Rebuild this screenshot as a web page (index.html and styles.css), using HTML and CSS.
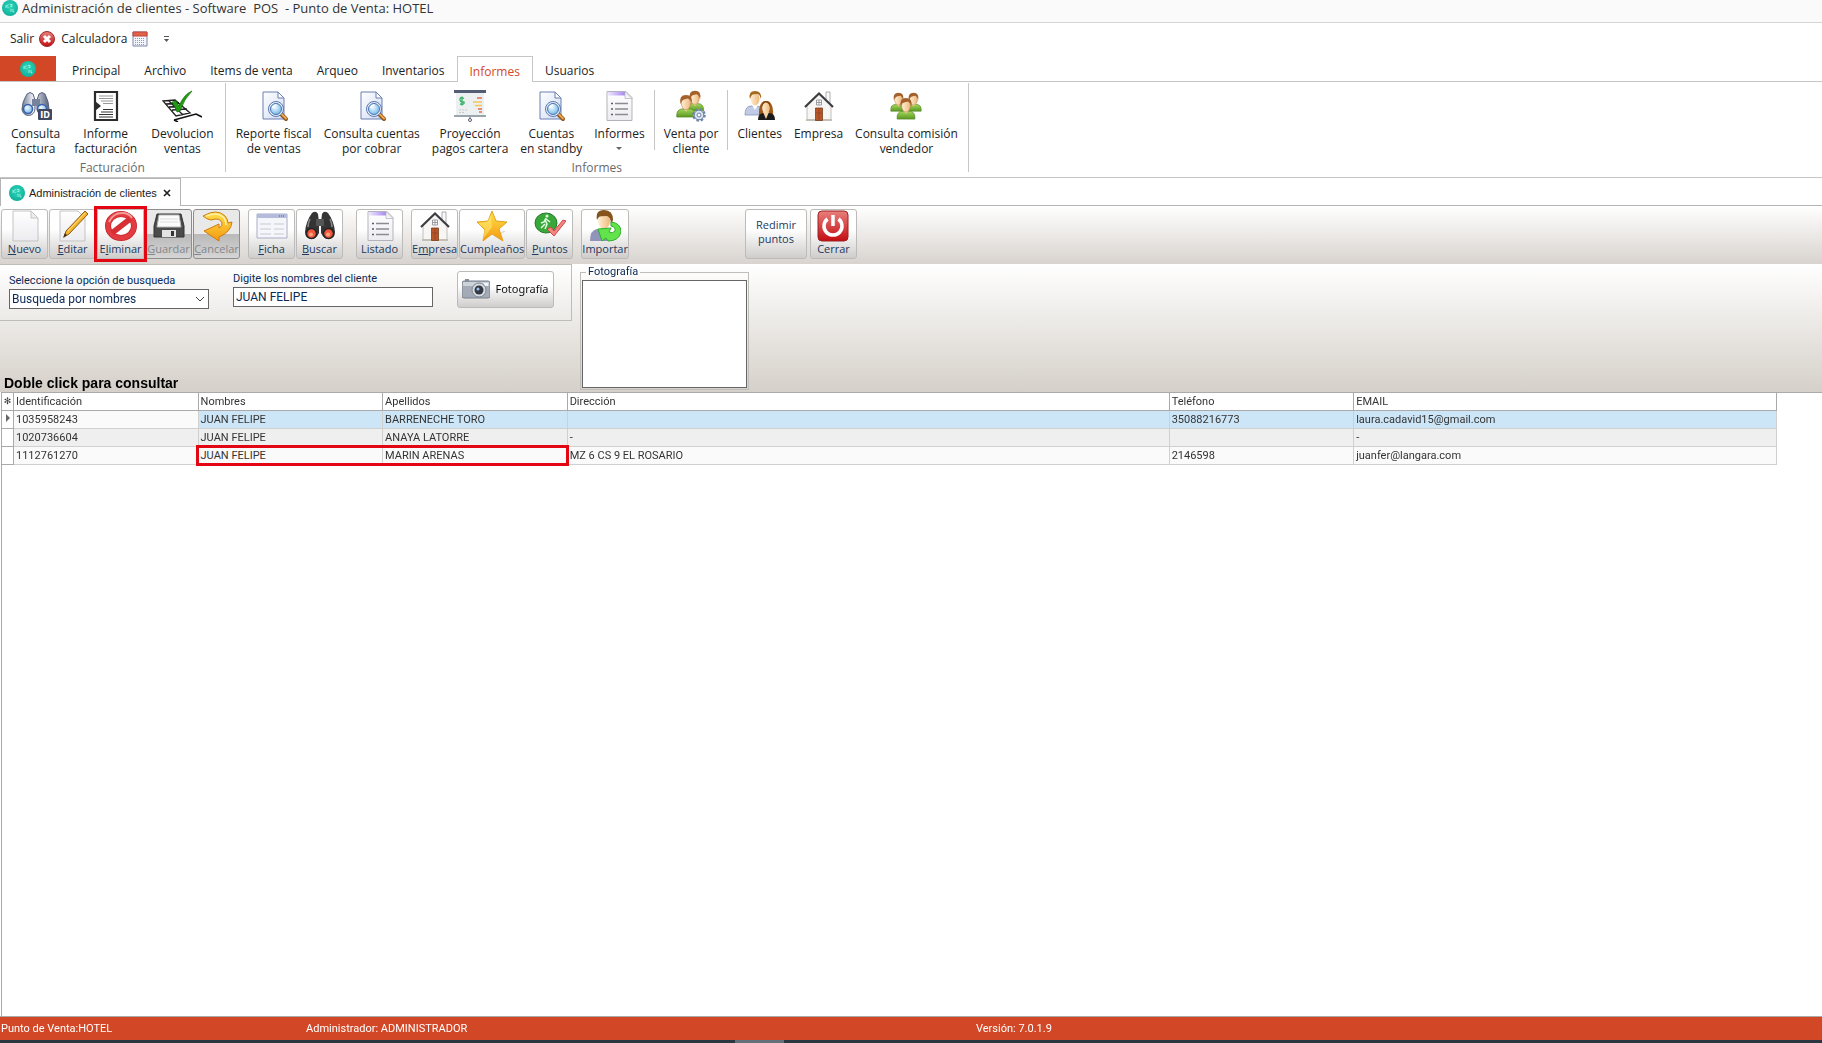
FILE: index.html
```html
<!DOCTYPE html>
<html lang="es">
<head>
  <meta charset="UTF-8">
  <meta name="viewport" content="width=device-width, initial-scale=1.0">
  <title>Administración de clientes</title>
  <link rel="stylesheet" href="styles.css">
</head>
<body>

<!-- Icons used more than once -->
<svg class="sprite" aria-hidden="true">
  <defs>
    <linearGradient id="page" x1="0" y1="0" x2="1" y2="1"><stop offset="0" stop-color="#fff"/><stop offset="1" stop-color="#cfdbf3"/></linearGradient>
    <linearGradient id="paper" x1="0" y1="0" x2="0" y2="1"><stop offset="0" stop-color="#fff"/><stop offset="1" stop-color="#ececf0"/></linearGradient>
    <linearGradient id="violet" x1="0" y1="0" x2="1" y2="0"><stop offset="0" stop-color="#eee6ff"/><stop offset="1" stop-color="#9a78ec"/></linearGradient>
    <linearGradient id="green" x1="0" y1="0" x2="0" y2="1"><stop offset="0" stop-color="#a6d65c"/><stop offset="1" stop-color="#5b9a22"/></linearGradient>
    <linearGradient id="red" x1="0" y1="0" x2="0" y2="1"><stop offset="0" stop-color="#e8807c"/><stop offset="1" stop-color="#c20d12"/></linearGradient>
    <linearGradient id="steel" x1="0" y1="0" x2="1" y2="0"><stop offset="0" stop-color="#6f7a90"/><stop offset=".4" stop-color="#eef1f6"/><stop offset="1" stop-color="#56617a"/></linearGradient>
    <linearGradient id="skin" x1="0" y1="0" x2="1" y2="0"><stop offset="0" stop-color="#fff0d6"/><stop offset="1" stop-color="#eeb87c"/></linearGradient>
    <linearGradient id="gold" x1="0" y1="0" x2="0" y2="1"><stop offset="0" stop-color="#ffe14a"/><stop offset="1" stop-color="#f59a12"/></linearGradient>
    <radialGradient id="glass" cx=".4" cy=".35" r=".7"><stop offset="0" stop-color="#f2fbff"/><stop offset="1" stop-color="#6db6e8"/></radialGradient>
    <radialGradient id="teal" cx=".5" cy=".4" r=".6"><stop offset="0" stop-color="#2fd9bd"/><stop offset="1" stop-color="#0fae98"/></radialGradient>
  </defs>

  <symbol id="logo" viewBox="0 0 16 16">
    <circle cx="8" cy="8" r="8" fill="url(#teal)"/>
    <path d="M4 5v3M4.500 6l2-1.500M5 6.500l1.500 1.500M8 4.500h2v2H8.500M9 9v3M11 9v3l1.500 0" fill="none" stroke="#c9fff4" stroke-width=".7"/>
  </symbol>

  <symbol id="search-page" viewBox="0 0 32 32">
    <path d="M5 2h15l6 6v21H5z" fill="url(#page)" stroke="#6b7fb4"/>
    <path d="M20 2v6h6z" fill="#fff" stroke="#6b7fb4"/>
    <path d="M23 24l5 5" stroke="#8c531d" stroke-width="4" stroke-linecap="round"/>
    <path d="M23.500 24l4.500 4.500" stroke="#f0a54a" stroke-width="2" stroke-linecap="round"/>
    <circle cx="18" cy="19" r="7.500" fill="#e8eef8" stroke="#5c77ad"/>
    <circle cx="18" cy="19" r="5.500" fill="url(#glass)" stroke="#4a74b0"/>
    <path d="M14.500 18q1-3 4-3" fill="none" stroke="#fff" stroke-width="1.500"/>
  </symbol>

  <symbol id="list-page" viewBox="0 0 32 32">
    <path d="M4 1.500h19l6 6v23H4z" fill="url(#paper)" stroke="#b3b3bd"/>
    <path d="M5 2h17l3 3.500H5z" fill="url(#violet)"/>
    <path d="M22 1.500v7h7z" fill="#f3f3f6" stroke="#b3b3bd" stroke-width=".7"/>
    <path d="M12 13.500h13M12 19h13M12 24.500h13" stroke="#8b8b92" stroke-width="1.400"/>
    <path d="M8 13.500h2M8 19h2M8 24.500h2" stroke="#5c5c63" stroke-width="1.600"/>
  </symbol>

  <symbol id="house" viewBox="0 0 32 32">
    <path d="M23 2h4v12h-4z" fill="#fafafa" stroke="#9a9a9a" stroke-width=".8"/>
    <path d="M4 15L16 4l12 11v15H4z" fill="#f7f6f4" stroke="#b5b2ac" stroke-width=".8"/>
    <path d="M3 29h26v2H3z" fill="#c3bfb7"/>
    <path d="M2 17L16 3.500 30 17" fill="none" stroke="#3d3d42" stroke-width="2.200"/>
    <path d="M12.500 18h7v12.500h-7z" fill="#b8562a" stroke="#77401f" stroke-width=".8"/>
    <path d="M16 18v12M13 23h6" stroke="#8b421f" stroke-width=".7"/>
    <path d="M13.500 10h5v5h-5zM16 10v5M13.500 12.500h5" fill="#fff" stroke="#85888f" stroke-width=".8"/>
  </symbol>

  <symbol id="person" viewBox="0 0 20 26">
    <path d="M0 25q-1-9 7-9h6q8 0 7 9z" fill="url(#green)" stroke="#4d7f1f" stroke-width=".7"/>
    <path d="M6.500 15l3.500 4 3.500-4z" fill="#f6d2a3"/>
    <ellipse cx="10" cy="10" rx="5" ry="7" fill="url(#skin)" stroke="#b37440" stroke-width=".6"/>
    <path d="M4 11Q2 1 10 1t6 10q-1-5-4-6-5 1-6 2-1 1-2 4z" fill="#a5612c"/>
  </symbol>
</svg>

<div class="app">
  <header class="title-bar">
    <svg class="icon-16"><use href="#logo"/></svg>
    <h1>Administración de clientes - Software &nbsp;POS &nbsp;- Punto de Venta: HOTEL</h1>
  </header>

  <div class="quick-bar">
    <button>Salir
      <svg class="icon-16" viewBox="0 0 16 16"><circle cx="8" cy="8" r="7.500" fill="url(#red)" stroke="#9c2a2a"/><path d="M5 5l6 6M11 5l-6 6" stroke="#fff" stroke-width="3"/></svg>
    </button>
    <button>Calculadora
      <svg class="icon-16" viewBox="0 0 16 16"><path d="M1 1h14v14H1z" fill="#f3f5fc" stroke="#7a86a8"/><path d="M1 1h14v4H1z" fill="#e2604c" stroke="#c04636"/><path d="M3 7.500h10M3 9.500h10M3 11.500h10M3 13.500h10" stroke="#8b9bd0" stroke-dasharray="1 1"/></svg>
    </button>
    <button class="quick-more" aria-label="Personalizar">
      <svg class="icon-8" viewBox="0 0 8 8"><path d="M2 1.500h5" stroke="#555"/><path d="M2 4h5L4.500 7z" fill="#555"/></svg>
    </button>
  </div>

  <nav class="tabs">
    <button class="file-tab" aria-label="Menú"><svg class="icon-16"><use href="#logo"/></svg></button>
    <a href="#">Principal</a>
    <a href="#">Archivo</a>
    <a href="#">Items de venta</a>
    <a href="#">Arqueo</a>
    <a href="#">Inventarios</a>
    <a href="#" class="active">Informes</a>
    <a href="#">Usuarios</a>
  </nav>

  <div class="ribbon">
    <section class="ribbon-group">
      <div class="ribbon-items">
        <button class="ribbon-btn">
          <svg viewBox="0 0 32 32">
            <path d="M7 4q3-3 6 0l2 6v9a6 6 0 0 1-13 0q0-7 5-15zM25 4q-3-3-6 0l-2 6v9a6 6 0 0 0 12 0q0-7-4-15z" fill="url(#steel)" stroke="#59657e"/>
            <path d="M12 9h8v7h-8z" fill="#77839c"/>
            <circle cx="8" cy="19" r="4.500" fill="url(#glass)" stroke="#3c5fae" stroke-width="1.500"/>
            <circle cx="22" cy="19" r="4.500" fill="url(#glass)" stroke="#3c5fae" stroke-width="1.500"/>
            <rect x="18" y="19" width="14" height="11" rx="1" fill="#3f4961"/>
            <text x="25" y="28" class="id-text">ID</text>
          </svg>
          <span>Consulta<br>factura</span>
        </button>
        <button class="ribbon-btn">
          <svg viewBox="0 0 32 32">
            <path d="M5 2h22v28H5z" fill="#fff" stroke="#2b2b2b" stroke-width="2.200"/>
            <path d="M5 11l6 5-6 5z" fill="#2b2b2b"/>
            <path d="M9 6h14M9 8.500h14M11 11h12M13 13.500h10" stroke="#999"/>
            <path d="M13 19.500h10M11 22h12M9 24.500h14M9 27h14" stroke="#333"/>
          </svg>
          <span>Informe<br>facturación</span>
        </button>
        <button class="ribbon-btn">
          <svg class="wide" viewBox="0 0 40 32">
            <path d="M1 11l12-1 15 13-14 3zM4 14l13-1M7 17l14-1M10 20l15-1M7 11l14 14" fill="#fff" stroke="#222" stroke-width="1.300"/>
            <path d="M12 30l22-6 6 3M12 30l4 2" fill="none" stroke="#111" stroke-width="1.600"/>
            <path d="M10 12l4-1 3 5q5-12 13-15-8 8-12 20l-3 1q-2-6-5-10z" fill="#1f9c12" stroke="#127008" stroke-width=".7"/>
          </svg>
          <span>Devolucion<br>ventas</span>
        </button>
      </div>
      <h2>Facturación</h2>
    </section>

    <section class="ribbon-group compact">
      <div class="ribbon-items">
        <button class="ribbon-btn"><svg><use href="#search-page"/></svg><span>Reporte fiscal<br>de ventas</span></button>
        <button class="ribbon-btn"><svg><use href="#search-page"/></svg><span>Consulta cuentas<br>por cobrar</span></button>
        <button class="ribbon-btn">
          <svg viewBox="0 0 32 32">
            <path d="M2 3h28v22H2z" fill="#edf0f0"/>
            <path d="M0 0h32v3H0z" fill="#535d75"/>
            <path d="M0 25h32v2H0z" fill="#9ba5ae"/>
            <path d="M16 27v2" stroke="#535d75"/><circle cx="16" cy="30" r="1.500" fill="#fff" stroke="#535d75"/>
            <path d="M10 8.500q-4-2-4 1t4 2.500q1 3-4 2M8 6.500v9" fill="none" stroke="#35b166" stroke-width="1.300"/>
            <path d="M19 12h9M21 15.500h7" stroke="#f6c755" stroke-width="1.600"/>
            <path d="M23 8h5M24 19h4M25 22h3" stroke="#ea6a55" stroke-width="1.400"/>
            <path d="M5 20h9M5 22.500h6" stroke="#c5c9cd" stroke-dasharray="2 1"/>
          </svg>
          <span>Proyección<br>pagos cartera</span>
        </button>
        <button class="ribbon-btn"><svg><use href="#search-page"/></svg><span>Cuentas<br>en standby</span></button>
        <button class="ribbon-btn"><svg><use href="#list-page"/></svg><span>Informes<br><i class="arrow"></i></span></button>
        <div class="divider"></div>
        <button class="ribbon-btn">
          <svg viewBox="0 0 32 32">
            <use href="#person" x="11" y="0" width="18" height="22"/>
            <use href="#person" x="1" y="4" width="20" height="24"/>
            <circle cx="24" cy="25" r="5.500" fill="#dfe6f2" stroke="#6b80a5" stroke-width="2.500" stroke-dasharray="2.300 2"/>
            <circle cx="24" cy="25" r="4.800" fill="#dbe4f1" stroke="#6b80a5"/>
            <circle cx="24" cy="25" r="2" fill="#fff" stroke="#6b80a5"/>
          </svg>
          <span>Venta por<br>cliente</span>
        </button>
        <div class="divider"></div>
        <button class="ribbon-btn">
          <svg viewBox="0 0 32 32">
            <path d="M1 25q0-9 6-9h6q6 0 6 9z" fill="#c1cbe6" stroke="#7c8bb5" stroke-width=".7"/>
            <path d="M8 15l3 5 3-5z" fill="#fff"/>
            <ellipse cx="11" cy="9" rx="4.500" ry="6.500" fill="url(#skin)"/>
            <path d="M6 9Q4 1 11 1t6 8q-1-4-3-5-5 0-6 1-1 1-2 4z" fill="#a56a20"/>
            <path d="M15 27q-1-16 7-16t7 16z" fill="#a05a18"/>
            <path d="M14 30q0-7 6-7h5q6 0 6 7z" fill="#1b1b1b"/>
            <path d="M19 22l3 7 3-7z" fill="#f6d2a3"/>
            <ellipse cx="22" cy="18" rx="3.800" ry="5.500" fill="url(#skin)"/>
            <path d="M18 17q1-4 4-5 3 1 4 5 1-6-4-6t-4 6z" fill="#87460f"/>
          </svg>
          <span>Clientes</span>
        </button>
        <button class="ribbon-btn"><svg><use href="#house"/></svg><span>Empresa</span></button>
        <button class="ribbon-btn">
          <svg viewBox="0 0 32 32">
            <use href="#person" x="-1" y="2" width="19" height="20"/>
            <use href="#person" x="14" y="2" width="19" height="20"/>
            <use href="#person" x="5" y="7" width="22" height="23"/>
          </svg>
          <span>Consulta comisión<br>vendedor</span>
        </button>
      </div>
      <h2>Informes</h2>
    </section>
  </div>

  <div class="doc-tabs">
    <div class="doc-tab">
      <svg class="icon-16"><use href="#logo"/></svg>
      <span>Administración de clientes</span>
      <button aria-label="Cerrar pestaña"><svg class="icon-8" viewBox="0 0 8 8"><path d="M1 1l6 6M7 1L1 7" stroke="#222" stroke-width="1.700"/></svg></button>
    </div>
  </div>

  <div class="toolbar">
    <div class="tool-group">
      <button class="tool-btn">
        <svg viewBox="0 0 32 32"><path d="M4 1h18l7 7v23H4z" fill="url(#paper)" stroke="#c3c3c3"/><path d="M22 1v7h7z" fill="#eee" stroke="#c3c3c3"/></svg>
        <span><u>N</u>uevo</span>
      </button>
      <button class="tool-btn">
        <svg viewBox="0 0 32 32"><path d="M3 1h18l7 7v23H3z" fill="url(#paper)" stroke="#c3c3c3"/><path d="M7 27l2-6L28 1l3 3-19 20z" fill="#f4b52d" stroke="#8e5a17"/><path d="M8 23l2 2-4 3z" fill="#3d3020"/><path d="M11 21L28 3" stroke="#ffe28a"/></svg>
        <span><u>E</u>ditar</span>
      </button>
      <button class="tool-btn highlighted">
        <svg viewBox="0 0 32 32"><ellipse cx="16" cy="16" rx="13" ry="12" fill="#fff" stroke="#c4262b" stroke-width="6"/><ellipse cx="16" cy="16" rx="13" ry="12" fill="none" stroke="#e23c40" stroke-width="4.500"/><path d="M7 23L25 9" stroke="#d62f34" stroke-width="5.500"/><path d="M4 12q4-9 13-9 7 0 10 5" fill="none" stroke="#f59a98" stroke-width="2"/></svg>
        <span>E<u>l</u>iminar</span>
      </button>
      <button class="tool-btn" disabled>
        <svg viewBox="0 0 32 32"><path d="M4 4h24l3 12v11H1V16z" fill="#4b4b4b" stroke="#333"/><path d="M6 5h20l2 12H4z" fill="#fbfbfb" stroke="#bbb"/><path d="M9 20h14v7H9z" fill="#e2e2e2"/><path d="M18 21h3v5h-3z" fill="#333"/><path d="M7 9h18M7 12h18" stroke="#ddd"/></svg>
        <span><u>G</u>uardar</span>
      </button>
      <button class="tool-btn" disabled>
        <svg viewBox="0 0 32 32"><path d="M2 6q14-8 22 0 3 3 3 7l4-1q-1 10-13 15v4L3 21l15-7v4q4-2 3-5-2-6-11-3-5-1-8-4z" fill="url(#gold)" stroke="#d07a0b"/><path d="M5 6q12-5 18 2 2 3 2 7" fill="none" stroke="#fff0a8" stroke-width="1.500"/></svg>
        <span><u>C</u>ancelar</span>
      </button>
    </div>

    <div class="tool-group">
      <button class="tool-btn">
        <svg viewBox="0 0 32 32"><path d="M1 4h30v24H1z" fill="#f5f6fa" stroke="#a7aec6"/><path d="M1 4h30v4H1z" fill="#b4bcdc"/><path d="M23 6h6" stroke="#4d5b95" stroke-dasharray="1 1"/><path d="M4 14h11M18 14h10M4 19h11M18 19h10M4 24h11M18 24h10" stroke="#c6c9d4"/></svg>
        <span><u>F</u>icha</span>
      </button>
      <button class="tool-btn">
        <svg viewBox="0 0 32 32"><path d="M8 3q4-3 6 1l1 8v11q-3 6-7 6-7 0-7-7Q2 11 8 3zM24 3q-4-3-6 1l-1 8v11q3 6 7 6 7 0 7-7-1-11-7-19z" fill="#343434"/><path d="M6 9q-2 4-2 8M26 9q2 4 2 8" stroke="#8a8a8a" stroke-width="1.500" fill="none"/><path d="M12 9h8v7h-8z" fill="#555"/><circle cx="7.500" cy="23.500" r="5" fill="#f2573c" stroke="#222" stroke-width="1.500"/><circle cx="24.500" cy="23.500" r="5" fill="#f2573c" stroke="#222" stroke-width="1.500"/><circle cx="7" cy="24.500" r="2" fill="#ffa37f"/><circle cx="24" cy="24.500" r="2" fill="#ffa37f"/></svg>
        <span><u>B</u>uscar</span>
      </button>
    </div>

    <div class="tool-group">
      <button class="tool-btn"><svg><use href="#list-page"/></svg><span>Listado</span></button>
    </div>

    <div class="tool-group">
      <button class="tool-btn"><svg><use href="#house"/></svg><span>E<u>m</u>presa</span></button>
      <button class="tool-btn">
        <svg viewBox="0 0 32 32"><path d="M18 29l12-8-4 0 3-2" fill="#ddd"/><path d="M16 1l4 10 11 1-8 7 4 12-11-7-9 7 2-11-8-8 11-1z" fill="url(#gold)" stroke="#e3a21b"/><path d="M15 5l1 12-9 12 2-10-7-6 9-1z" fill="#fff07a" opacity=".5"/></svg>
        <span>Cumpleaños</span>
      </button>
      <button class="tool-btn">
        <svg viewBox="0 0 32 32"><ellipse cx="12" cy="13" rx="11" ry="10" fill="#38a83a" stroke="#267a2a"/><circle cx="13" cy="6" r="1.500" fill="#e4ffe2"/><path d="M12 8l-2 4-3 1M11 10l2 4-2 5M12 9l4 3M11 14l-4 4" fill="none" stroke="#e4ffe2" stroke-width="1.500"/><path d="M13 19l4-2 3 4 9-11 3 1-12 15z" fill="#f28682" stroke="#cf4444"/></svg>
        <span><u>P</u>untos</span>
      </button>
    </div>

    <div class="tool-group">
      <button class="tool-btn">
        <svg viewBox="0 0 32 32"><path d="M1 31q0-11 7-12h9l4 12z" fill="#8f94b8"/><ellipse cx="15" cy="11" rx="6" ry="8" fill="url(#skin)"/><path d="M8 10Q6 0 15 0t9 10l-2 5q0-8-4-9-7 0-8 1-1 1-2 3z" fill="#85531b"/><path d="M22 12q10 1 10 10-2 9-13 9l-2-3-4 3-4-12 13-1-2 4q4 2 6-1 1-4-4-5z" fill="#62e34b" stroke="#2fae2b"/></svg>
        <span>Importar</span>
      </button>
    </div>

    <div class="tool-group tool-end">
      <button class="tool-btn text-only"><span>Redimir<br>puntos</span></button>
      <button class="tool-btn">
        <svg viewBox="0 0 32 32"><rect x="1" y="1" width="30" height="30" rx="4" fill="url(#red)" stroke="#a02020"/><path d="M10.500 9a9 9 0 1 0 11 0" fill="none" stroke="#fff" stroke-width="3.500"/><path d="M16 5v11" stroke="#fff" stroke-width="3.500"/></svg>
        <span>Cerrar</span>
      </button>
    </div>
  </div>

  <main>
    <form class="search-panel">
      <div class="left-side">
        <div class="filter-box">
          <div class="field field-option">
            <label for="searchOption">Seleccione la opción de busqueda</label>
            <div class="select-wrap">
              <select id="searchOption">
                <option>Busqueda por nombres</option>
              </select>
              <svg class="chevron" viewBox="0 0 10 6"><path d="M1 1l4 4 4-4" fill="none" stroke="#444"/></svg>
            </div>
          </div>
          <div class="field">
            <label for="clientName">Digite los nombres del cliente</label>
            <input type="text" id="clientName" value="JUAN FELIPE">
          </div>
          <button type="button" class="photo-btn">
            <svg viewBox="0 0 28 20"><rect x="0" y="2" width="28" height="17" rx="2" fill="#a3abb6" stroke="#79818d"/><path d="M1 3h26v4H1z" fill="#cdd3da"/><path d="M3 0h4v3H3z" fill="#868e99"/><path d="M22 4h4v3h-4z" fill="#f0f4f8"/><circle cx="17" cy="11" r="7" fill="#d6dbe1" stroke="#7d858f"/><circle cx="17" cy="11" r="4.500" fill="#333a46"/><circle cx="16" cy="10" r="1.500" fill="#9fc0ea"/></svg>
            <span>Fotografía</span>
          </button>
        </div>
        <p class="hint">Doble click para consultar</p>
      </div>
      <fieldset class="photo-box">
        <legend>Fotografía</legend>
        <div class="photo"></div>
      </fieldset>
    </form>

    <div class="grid">
      <table>
        <colgroup>
          <col class="col-mark">
          <col class="col-std">
          <col class="col-std">
          <col class="col-std">
          <col>
          <col class="col-std">
          <col class="col-email">
        </colgroup>
        <thead>
          <tr>
            <th class="mark">✻</th>
            <th>Identificación</th>
            <th>Nombres</th>
            <th>Apellidos</th>
            <th>Dirección</th>
            <th>Teléfono</th>
            <th>EMAIL</th>
          </tr>
        </thead>
        <tbody>
          <tr class="selected">
            <td class="mark"><svg class="pointer" viewBox="0 0 4 8"><path d="M0 0l4 4-4 4z" fill="#666"/></svg></td>
            <td>1035958243</td>
            <td>JUAN FELIPE</td>
            <td>BARRENECHE TORO</td>
            <td></td>
            <td>35088216773</td>
            <td>laura.cadavid15@gmail.com</td>
          </tr>
          <tr class="alt">
            <td class="mark"></td>
            <td>1020736604</td>
            <td>JUAN FELIPE</td>
            <td>ANAYA LATORRE</td>
            <td>-</td>
            <td></td>
            <td>-</td>
          </tr>
          <tr>
            <td class="mark"></td>
            <td>1112761270</td>
            <td class="framed">JUAN FELIPE<span class="frame"></span></td>
            <td>MARIN ARENAS</td>
            <td>MZ 6 CS 9 EL ROSARIO</td>
            <td>2146598</td>
            <td>juanfer@langara.com</td>
          </tr>
        </tbody>
      </table>
    </div>
  </main>

  <footer class="status-bar">
    <span>Punto de Venta:HOTEL</span>
    <span>Administrador: ADMINISTRADOR</span>
    <span>Versión: 7.0.1.9</span>
  </footer>
  <div class="taskbar"><div class="taskbar-item"></div></div>
</div>

<script>
  // start with the cursor at the end of the name
  const nameInput = document.getElementById('clientName');
  nameInput.focus();
  nameInput.setSelectionRange(nameInput.value.length, nameInput.value.length);
</script>

</body>
</html>
```

FILE: styles.css
```css
* {
  box-sizing: border-box;
}

body {
  margin: 0;
  font-family: "Open Sans", "Noto Sans", sans-serif;
  font-size: 12px;
  color: #222;
  background-color: #fff;
}

button {
  font: inherit;
  color: inherit;
  background: none;
  border: none;
  padding: 0;
}

a {
  color: inherit;
  text-decoration: none;
}

.sprite {
  position: absolute;
  width: 0;
  height: 0;
}

.icon-16 {
  width: 16px;
  height: 16px;
  flex: none;
}

.icon-8 {
  width: 8px;
  height: 8px;
  display: block;
}

.app {
  min-height: 100vh;
  display: flex;
  flex-direction: column;
}

/* Title and quick access */
.title-bar {
  display: flex;
  align-items: center;
  gap: 4px;
  height: 23px;
  padding: 0 2px 6px;
  background-color: #fafafa;
  border-bottom: 1px solid #d5d5d5;
}

.title-bar h1 {
  margin: 0;
  font-size: 13px;
  font-weight: normal;
  color: #333;
}

.quick-bar {
  display: flex;
  align-items: center;
  gap: 6px;
  height: 33px;
  padding: 0 10px 2px;
}

.quick-bar button {
  display: flex;
  align-items: center;
  gap: 5px;
}

.quick-bar .quick-more {
  margin-left: 8px;
}

/* Ribbon tabs */
.tabs {
  display: flex;
  height: 26px;
  border-bottom: 1px solid #c6c6c6;
}

.tabs a {
  height: 26px;
  padding: 0 12px;
  line-height: 29px;
}

.file-tab {
  display: flex;
  justify-content: center;
  align-items: center;
  width: 56px;
  margin-right: 4px;
  background-color: #d24726;
}

.tabs .active {
  color: #d24726;
  background-color: #fff;
  border: 1px solid #c6c6c6;
  border-bottom: none;
}

/* Ribbon */
.ribbon {
  display: flex;
  height: 96px;
  border-bottom: 1px solid #c6c6c6;
}

.ribbon-group {
  display: flex;
  flex-direction: column;
  height: 89px;
  margin-top: 1px;
  padding: 0 4px;
  border-right: 1px solid #c6c6c6;
}

.ribbon-items {
  display: flex;
  flex: 1;
}

.ribbon-group h2 {
  margin: 0;
  font-size: 12px;
  font-weight: normal;
  line-height: 14px;
  height: 11px;
  text-align: center;
  color: #6a6a6a;
}

.ribbon-btn {
  display: flex;
  flex-direction: column;
  align-items: center;
  gap: 4px;
  padding: 7px 7px 0;
  line-height: 15px;
  text-align: center;
  white-space: nowrap;
}

.compact .ribbon-btn {
  padding: 7px 6px 0;
}

.ribbon-btn svg {
  width: 32px;
  height: 32px;
}

.ribbon-btn .wide {
  width: 40px;
}

.id-text {
  font: bold 8px "DejaVu Sans", sans-serif;
  fill: #fff;
  text-anchor: middle;
}

.arrow {
  display: inline-block;
  border: 3px solid transparent;
  border-top-color: #666;
}

.divider {
  width: 1px;
  height: 60px;
  margin: 7px 3px 0;
  background-color: #c6c6c6;
}

/* Document tabs */
.doc-tabs {
  display: flex;
  height: 28px;
  border-bottom: 1px solid #b4b4b4;
}

.doc-tab {
  display: flex;
  align-items: center;
  gap: 4px;
  height: 28px;
  padding: 1px 7px 0 8px;
  font-family: "Liberation Sans", sans-serif;
  font-size: 11px;
  background-color: #fff;
  border: 1px solid #b4b4b4;
  border-bottom: none;
}

.doc-tab button {
  padding: 2px;
}

/* Toolbar */
.toolbar {
  display: flex;
  align-items: flex-start;
  gap: 8px;
  height: 58px;
  padding: 3px 1px 0;
  background: linear-gradient(#fff, #d8d3ce);
}

.tool-group {
  display: flex;
  gap: 1px;
}

.tool-group:nth-child(3) {
  margin-left: 5px;
}

.tool-end {
  margin-left: 108px;
  gap: 3px;
}

.tool-btn {
  display: flex;
  flex-direction: column;
  align-items: center;
  min-width: 47px;
  height: 50px;
  font-size: 11px;
  line-height: 14px;
  color: #1e395b;
  background: linear-gradient(#fff 40%, #cfcdcc);
  border: 1px solid #bdbbb9;
  border-radius: 3px;
}

.tool-btn svg {
  width: 32px;
  height: 32px;
}

.tool-btn:disabled {
  color: #85878b;
  background: linear-gradient(#e9e9e9 50%, #b9b9b9 50%, #d5d5d5);
  border-color: #8d8d8d;
}

.highlighted {
  border-radius: 0;
  outline: 3px solid #e30613;
  z-index: 1;
}

.text-only {
  width: 62px;
  padding-top: 8px;
}

/* Search panel */
main {
  flex: 1;
  display: flex;
  flex-direction: column;
}

.search-panel {
  display: flex;
  gap: 8px;
  height: 128px;
  background: linear-gradient(#fff, #d5d0c9);
  font-family: Roboto, sans-serif;
  color: #0b2a55;
}

.left-side {
  display: flex;
  flex-direction: column;
  justify-content: space-between;
}

.filter-box {
  display: flex;
  gap: 24px;
  height: 57px;
  padding: 6px 17px 0 9px;
  border: 1px solid #bfbdba;
  border-left: none;
}

.field {
  display: flex;
  flex-direction: column;
  width: 200px;
}

.field-option {
  padding-top: 2px;
}

.field label {
  font-size: 11px;
  line-height: 16px;
}

.select-wrap {
  position: relative;
}

.field select,
.field input {
  width: 100%;
  height: 20px;
  padding: 0 2px;
  font: inherit;
  color: inherit;
  background-color: #fff;
  border: 1px solid #666;
  border-radius: 0;
  outline: none;
  appearance: none;
}

.chevron {
  position: absolute;
  top: 7px;
  right: 4px;
  width: 10px;
  height: 6px;
}

.photo-btn {
  display: flex;
  justify-content: center;
  align-items: center;
  gap: 5px;
  width: 97px;
  height: 37px;
  padding-bottom: 2px;
  font-family: "Noto Sans", sans-serif;
  font-size: 11px;
  color: #111;
  background: linear-gradient(#fff 40%, #cfcdcc);
  border: 1px solid #bdbbb9;
  border-radius: 3px;
}

.photo-btn svg {
  width: 28px;
  height: 20px;
}

.hint {
  margin: 0;
  padding-left: 4px;
  font-family: "Liberation Sans", sans-serif;
  font-size: 14px;
  font-weight: bold;
  line-height: 18px;
  color: #000;
}

.photo-box {
  width: 169px;
  height: 126px;
  margin: 0;
  padding: 0 1px 1px;
  border: 1px solid #bfbdba;
}

.photo-box legend {
  margin-left: 4px;
  padding: 0 2px;
  font-size: 11px;
  line-height: 16px;
}

.photo {
  height: 108px;
  background-color: #fff;
  border: 1px solid #666;
}

/* Client grid */
.grid {
  flex: 1;
  margin-left: 1px;
  border-top: 1px solid #aaa;
  border-left: 1px solid #aaa;
}

table {
  width: 97.5%;
  table-layout: fixed;
  border-collapse: separate;
  border-spacing: 0;
  font-family: Roboto, sans-serif;
  font-size: 11px;
}

.col-mark {
  width: 12px;
}

.col-std {
  width: 10.4%;
}

.col-email {
  width: 23.8%;
}

th,
td {
  height: 18px;
  padding: 0 2px;
  line-height: 17px;
  font-weight: normal;
  text-align: left;
  white-space: nowrap;
  color: #333;
  background-color: #fafafa;
  border-right: 1px solid #d0d0d0;
  border-bottom: 1px solid #d0d0d0;
}

th {
  background-color: #fff;
  border-color: #aaa;
}

.alt td {
  background-color: #efefef;
}

.selected td:nth-child(n+3) {
  background-color: #cde6f7;
}

td.mark,
th.mark {
  padding: 0;
  font-family: "DejaVu Sans", sans-serif;
  font-size: 9px;
  text-align: center;
  background-color: #fff;
  border-color: #aaa;
}

.pointer {
  width: 4px;
  height: 8px;
}

.framed {
  position: relative;
}

.frame {
  position: absolute;
  top: -2px;
  left: -3px;
  width: calc(200% + 6px);
  height: 21px;
  border: 3px solid #e30613;
  z-index: 1;
}

/* Status bar */
.status-bar {
  display: grid;
  grid-template-columns: 305px 670px 1fr;
  height: 24px;
  padding-left: 1px;
  font-family: Roboto, sans-serif;
  font-size: 11px;
  line-height: 24px;
  color: #fff;
  background-color: #d24726;
  border-top: 1px solid #aaa;
}

.taskbar {
  height: 3px;
  background-color: #2b3640;
}

.taskbar-item {
  width: 49px;
  height: 3px;
  margin-left: 735px;
  background-color: #66707a;
}
```
